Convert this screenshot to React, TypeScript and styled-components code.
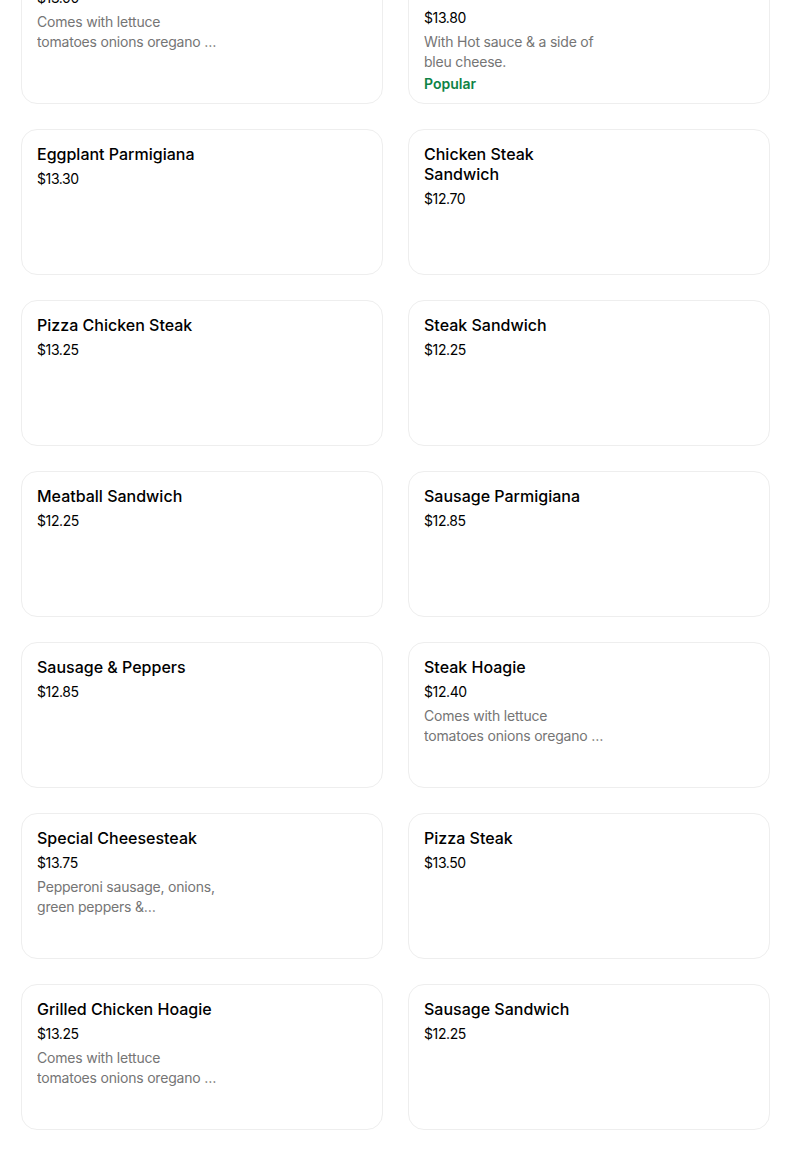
import React from 'react'
import styled, { createGlobalStyle } from 'styled-components'

// -------------------------------------------------------- //
//                         Menu data                        //
// -------------------------------------------------------- //

interface MenuItem {
  name: string,
  price: string,
  description?: string,
  popular?: boolean
}

const hoagieText = 'Comes with lettuce tomatoes onions oregano oil and mayo on a fresh roll'

const items: MenuItem[] = [
  { name: 'Cheesesteak Hoagie', price: '$13.00', description: hoagieText },
  {
    name: 'Buffalo Chicken Cheesesteak',
    price: '$13.80',
    description: 'With Hot sauce & a side of bleu cheese.',
    popular: true
  },
  { name: 'Eggplant Parmigiana', price: '$13.30' },
  { name: 'Chicken Steak Sandwich', price: '$12.70' },
  { name: 'Pizza Chicken Steak', price: '$13.25' },
  { name: 'Steak Sandwich', price: '$12.25' },
  { name: 'Meatball Sandwich', price: '$12.25' },
  { name: 'Sausage Parmigiana', price: '$12.85' },
  { name: 'Sausage & Peppers', price: '$12.85' },
  { name: 'Steak Hoagie', price: '$12.40', description: hoagieText },
  {
    name: 'Special Cheesesteak',
    price: '$13.75',
    description: 'Pepperoni sausage, onions, green peppers & pepperoncini with cheese'
  },
  { name: 'Pizza Steak', price: '$13.50' },
  { name: 'Grilled Chicken Hoagie', price: '$13.25', description: hoagieText },
  { name: 'Sausage Sandwich', price: '$12.25' }
]

// -------------------------------------------------------- //
//                       Main Component                     //
// -------------------------------------------------------- //

const App = () => (
  <>
    <GlobalStyle />
    <MenuGrid>
      {items.map(item => (
        <MenuCard key={item.name} item={item} />
      ))}
    </MenuGrid>
  </>
)

export default App

const MenuCard = ({ item }: { item: MenuItem }) => (
  <Card>
    <Info>
      <Title>{item.name}</Title>
      <Price>{item.price}</Price>
      {item.description && <Description>{item.description}</Description>}
      {item.popular && <Popular>Popular</Popular>}
    </Info>
  </Card>
)

// -------------------------------------------------------- //
//                           Styles                         //
// -------------------------------------------------------- //

const GlobalStyle = createGlobalStyle`
  body {
    margin: 0;
    background: #ffffff;
    font-family: Inter, "Liberation Sans", sans-serif;
    color: #000000;
    overflow: hidden;
  }
`

const MenuGrid = styled.div`
  display: grid;
  grid-template-columns: 362px 362px;
  column-gap: 25px;
  row-gap: 25px;
  padding-left: 21px;
  margin-top: -52px;
`

const Card = styled.div`
  display: flex;
  min-height: 146px;
  box-sizing: border-box;
  padding: 14px 15px 9px;
  border: 1px solid #eeeeee;
  border-radius: 16px;
  background: #ffffff;
`

const Info = styled.div`
  width: 182px;
  display: flex;
  flex-direction: column;
`

const Title = styled.div`
  font-size: 16px;
  line-height: 20px;
  font-weight: 500;
  color: #000000;
`

const Price = styled.div`
  margin-top: 5px;
  font-size: 14px;
  line-height: 20px;
  letter-spacing: -0.4px;
  color: #000000;
`

const Description = styled.div`
  margin-top: 4px;
  font-size: 14px;
  line-height: 20px;
  letter-spacing: -0.2px;
  color: #757575;
  display: -webkit-box;
  -webkit-line-clamp: 2;
  -webkit-box-orient: vertical;
  overflow: hidden;
`

const Popular = styled.div`
  margin-top: 2px;
  font-size: 14px;
  line-height: 20px;
  font-weight: 600;
  color: #0e8345;
`
